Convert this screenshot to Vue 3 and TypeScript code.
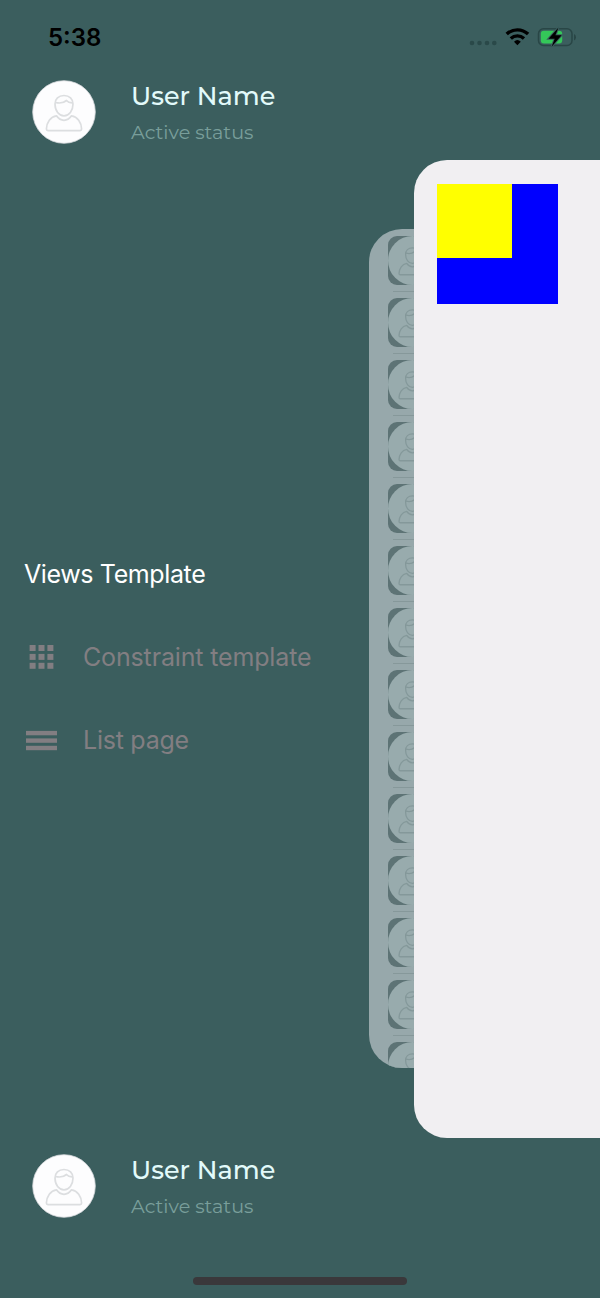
<script setup lang="ts">
interface Tile {
  id: number
}

const tiles: Tile[] = Array.from({ length: 14 }, (_, id) => ({ id }))
const gridOffsets: number[] = [0, 8.9, 17.8]
const personPaths: string[] = [
  'M23 24c0-5 3.500-8.500 9-8.500s9 3.500 9 8.500c0 7-4 11.800-9 11.800s-9-4.800-9-11.800z',
  'M23.500 22.500c3.500.8 8 .6 11-2 1.300 1.600 3.400 2.400 6 2.300',
  'M24.500 35.800c-6 .8-9.900 6.500-10.100 13.200q0 1.600 1.600 1.600h32q1.600 0 1.600-1.600c-.2-6.700-4.100-12.400-10.100-13.200-2 3-4.300 4.500-7.500 4.500s-5.500-1.500-7.500-4.500z',
]
</script>

<template>
  <div class="screen">
    <header class="status-bar">
      <span class="time">5:38</span>
      <svg class="indicators" width="112" height="24" viewBox="0 0 112 24">
        <g fill="#2a4949">
          <circle cx="6" cy="18" r="2.300" />
          <circle cx="13.500" cy="18" r="2.300" />
          <circle cx="21" cy="18" r="2.300" />
          <circle cx="28.300" cy="18" r="2.300" />
        </g>
        <g fill="none" stroke="#000" stroke-width="3.400">
          <path d="M40.700 9.100a15.600 15.600 0 0 1 21.400 0" />
          <path d="M44.800 13.400a9.800 9.800 0 0 1 13.200 0" />
        </g>
        <path d="M51.400 20.200l-3.400-3.500a5 5 0 0 1 6.800 0z" fill="#000" />
        <rect x="72.500" y="3.700" width="33.500" height="16.800" rx="5" fill="none" stroke="#294646" stroke-width="1.500" />
        <path d="M108 9v6.400q2-.9 2-3.200t-2-3.200z" fill="#294646" />
        <rect x="74.800" y="5.800" width="21.400" height="12.600" rx="3" fill="#34c759" />
        <path d="M92.500 2.500L82.500 13.700h6.200l-3.100 8L95.600 10.300h-6.200z" fill="#000" stroke="#3b5e5e" stroke-width="2" paint-order="stroke" />
      </svg>
    </header>

    <section class="user">
      <svg class="avatar" viewBox="0 0 64 64">
        <circle cx="32" cy="32" r="31.300" fill="#fdfdfe" stroke="#d5d8dc" stroke-width=".8" />
        <g class="person">
          <path v-for="d in personPaths" :key="d" :d="d" />
        </g>
      </svg>
      <div class="user-text">
        <span class="name">User Name</span>
        <span class="status">Active status</span>
      </div>
    </section>

    <nav class="menu">
      <h1 class="menu-title">Views Template</h1>
      <div class="menu-item">
        <svg class="menu-icon" width="32" height="24" viewBox="0 0 32 24">
          <template v-for="y in gridOffsets" :key="y">
            <rect v-for="x in gridOffsets" :key="x" :x="x + 4.600" :y="y" width="6" height="6" />
          </template>
        </svg>
        <span class="label constraint">Constraint template</span>
      </div>
      <div class="menu-item">
        <svg class="menu-icon" width="32" height="24" viewBox="0 0 32 24">
          <rect x="1" y="2.900" width="31" height="4.400" />
          <rect x="1" y="10.400" width="31" height="4.400" />
          <rect x="1" y="17.800" width="31" height="4.400" />
        </svg>
        <span class="label list">List page</span>
      </div>
    </nav>

    <section class="user">
      <svg class="avatar" viewBox="0 0 64 64">
        <circle cx="32" cy="32" r="31.300" fill="#fdfdfe" stroke="#d5d8dc" stroke-width=".8" />
        <g class="person">
          <path v-for="d in personPaths" :key="d" :d="d" />
        </g>
      </svg>
      <div class="user-text">
        <span class="name">User Name</span>
        <span class="status">Active status</span>
      </div>
    </section>

    <div class="home-indicator"></div>

    <div class="back-card">
      <div v-for="tile in tiles" :key="tile.id" class="row">
        <div class="tile">
          <svg width="49" height="49" viewBox="0 0 64 64">
            <circle cx="32" cy="32" r="32" fill="#98abad" />
            <g class="person faded">
              <path v-for="d in personPaths" :key="d" :d="d" />
            </g>
          </svg>
        </div>
        <div class="divider"></div>
      </div>
    </div>

    <div class="front-card">
      <div class="blue-box"><div class="yellow-box"></div></div>
    </div>
  </div>
</template>

<style>
body {
  margin: 0;
  background: #3b5e5e;
}
</style>

<style scoped>
.screen {
  position: relative;
  box-sizing: border-box;
  width: 600px;
  height: 1298px;
  overflow: hidden;
  display: flex;
  flex-direction: column;
  background: #3b5e5e;
  font-family: Inter, "Liberation Sans", sans-serif;
}
.status-bar {
  height: 80px;
  flex: none;
  display: flex;
  align-items: flex-start;
  justify-content: space-between;
  box-sizing: border-box;
  padding: 22px 22px 0 48px;
}
.time {
  margin-top: 1px;
  font-size: 24px;
  line-height: 30px;
  font-weight: 600;
  color: #000;
}
.indicators {
  margin-top: 3px;
}
.user {
  height: 64px;
  flex: none;
  display: flex;
  padding-left: 32px;
}
.avatar {
  width: 64px;
  height: 64px;
}
.person {
  fill: none;
  stroke: #dcdee0;
  stroke-width: 1.7;
  stroke-linejoin: round;
}
.faded {
  stroke: #84989a;
  stroke-width: 1.7;
}
.user-text {
  display: flex;
  flex-direction: column;
  margin-left: 35px;
  white-space: nowrap;
}
.name {
  font-family: Montserrat, Inter, sans-serif;
  font-size: 25.5px;
  line-height: 32px;
  font-weight: 500;
  color: #e2fafa;
}
.status {
  font-family: Montserrat, Inter, sans-serif;
  margin-top: 5px;
  font-size: 19.2px;
  line-height: 30px;
  font-weight: 400;
  color: #799e9b;
}
.menu {
  flex: none;
  height: 595px;
  margin-top: 415px;
  padding-left: 25px;
}
.menu-title {
  margin: 0 0 0 -1px;
  font-size: 25px;
  line-height: 30px;
  font-weight: 400;
  letter-spacing: -0.38px;
  color: #fff;
  white-space: nowrap;
}
.menu-item {
  height: 30px;
  margin-top: 53px;
  display: flex;
  align-items: center;
}
.menu-icon {
  margin-right: 26px;
  fill: #827e82;
}
.label {
  font-size: 25px;
  line-height: 30px;
  color: #827e82;
  white-space: nowrap;
}
.constraint {
  letter-spacing: -0.15px;
}
.list {
  letter-spacing: -0.25px;
}
.home-indicator {
  flex: none;
  width: 214px;
  height: 8px;
  border-radius: 4px;
  margin: 59px auto 0 193px;
  background: #3a383b;
}
.back-card {
  position: absolute;
  left: 369px;
  top: 229px;
  width: 231px;
  height: 839px;
  box-sizing: border-box;
  padding: 7px 0 0 19px;
  border-radius: 33px 0 0 33px;
  overflow: hidden;
  background: #97a8ab;
}
.row {
  height: 62px;
}
.tile {
  width: 49px;
  height: 49px;
  border-radius: 9px;
  overflow: hidden;
  background: #5d7375;
}
.tile svg {
  display: block;
}
.divider {
  height: 1px;
  margin: 6px 0 0 5px;
  background: #86989a;
}
.front-card {
  position: absolute;
  left: 414px;
  top: 160px;
  width: 186px;
  height: 978px;
  box-sizing: border-box;
  padding: 24px 0 0 23px;
  border-radius: 33px 0 0 33px;
  background: #f1eff2;
}
.blue-box {
  width: 121px;
  height: 120px;
  background: #00f;
}
.yellow-box {
  width: 75px;
  height: 74px;
  background: #ff0;
}
</style>
